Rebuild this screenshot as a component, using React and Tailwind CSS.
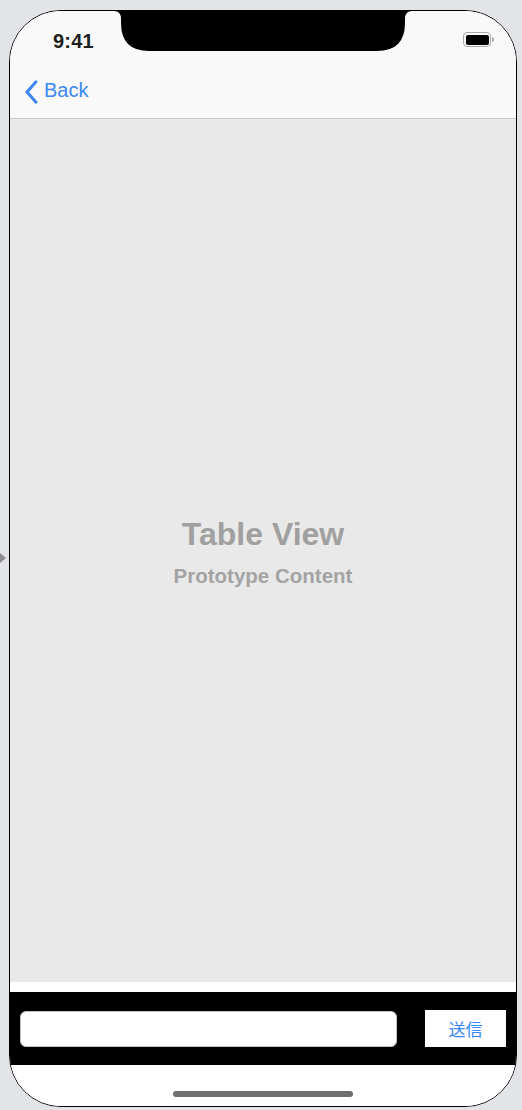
import React from "react";

const Chevron = () => (
  <svg width="13" height="24" viewBox="0 0 13 24" className="mt-[3px]">
    <path
      d="M11 1.8 L2 12 L11 22.2"
      fill="none"
      stroke="#3b88f5"
      strokeWidth="3"
      strokeLinecap="round"
      strokeLinejoin="round"
    />
  </svg>
);

const Battery = () => (
  <div className="flex items-center mt-[3px]">
    <div className="w-[28px] h-[15px] rounded-[4px] border-[1.5px] border-[#a9a9a9] p-[1.5px]">
      <div className="w-full h-full rounded-[2px] bg-black" />
    </div>
    <div className="w-[2px] h-[5px] rounded-r-sm bg-[#a9a9a9] ml-[1px]" />
  </div>
);

const Notch = () => (
  <svg
    width="298"
    height="40"
    viewBox="0 0 298 40"
    className="absolute left-[104px] top-0"
  >
    <path
      d="M0 0 H298 Q291 0 291 8 V12 Q291 40 263 40 H35 Q7 40 7 12 V8 Q7 0 0 0 Z"
      fill="#000"
    />
  </svg>
);

const App = () => {
  return (
    <div
      className="relative w-[522px] h-[1110px] bg-[#e3e4e8] pt-[10px] pl-[9px] overflow-hidden"
      style={{ fontFamily: '"Liberation Sans", Arial, sans-serif' }}
    >
      {/* little gray arrow on the canvas edge */}
      <div className="absolute left-0 top-[553px] w-0 h-0 border-y-[5px] border-y-transparent border-l-[6px] border-l-[#8e8e8e]" />

      <div className="relative w-[508px] h-[1097px] border border-black rounded-[52px] overflow-hidden flex flex-col bg-white">
        <Notch />

        {/* header: status bar + nav */}
        <div className="bg-[#f9f9f9] border-b border-[#c9c9c9]">
          <div className="h-[51px] flex items-start justify-between pl-[43px] pr-[22px] pt-[18px]">
            <span className="text-[20px] leading-[24px] font-bold text-[#1f1f1f] tracking-[0.2px]">
              9:41
            </span>
            <Battery />
          </div>
          <div className="h-[56px] flex items-center pl-[15px] gap-[6px]">
            <Chevron />
            <span className="text-[20px] leading-[24px] text-[#3b88f5]">Back</span>
          </div>
        </div>

        {/* table view placeholder */}
        <div className="flex-1 bg-[#e9e9e9] flex flex-col items-center justify-center">
          <div className="text-[32px] leading-[38px] font-bold text-[#a0a0a0]">Table View</div>
          <div className="mt-[11px] text-[20.5px] leading-[23px] font-bold text-[#a3a3a3]">
            Prototype Content
          </div>
        </div>

        <div className="h-[10px] bg-white" />

        {/* input bar */}
        <div className="h-[73px] bg-black flex items-center px-[10px] gap-[28px]">
          <div className="flex-1 h-[36px] bg-white rounded-[6px] border border-[#c4c4c4]" />
          <button
            className="w-[81px] h-[37px] bg-white text-[#3b88f5] text-[17px]"
            style={{ fontFamily: '"Noto Sans CJK JP", "Noto Sans", sans-serif' }}
          >
            送信
          </button>
        </div>

        {/* home indicator area */}
        <div className="h-[41px] shrink-0 bg-white flex justify-center pt-[26px]">
          <div className="w-[180px] h-[6px] rounded-full bg-[#6e6e6e]" />
        </div>
      </div>
    </div>
  );
};

export default App;
